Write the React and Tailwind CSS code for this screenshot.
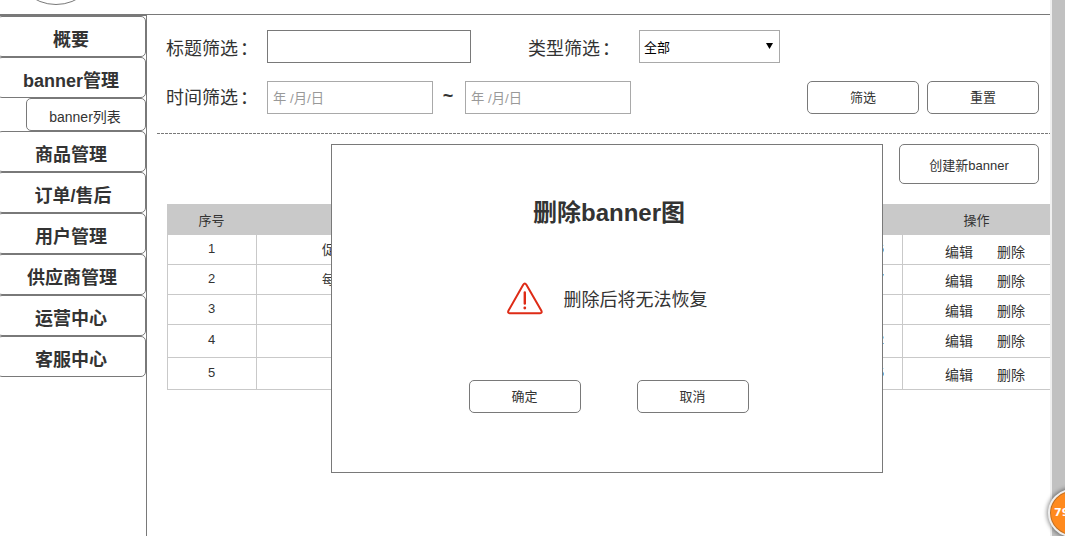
import React from "react";

const menu = [
  { label: "概要" },
  { label: "banner管理", sub: "banner列表" },
  { label: "商品管理" },
  { label: "订单/售后", shift: "pl-[4px]" },
  { label: "用户管理" },
  { label: "供应商管理", shift: "pl-[2px]" },
  { label: "运营中心" },
  { label: "客服中心" },
];

const rows = [
  { id: 1, title: "促", tail: "6", h: "h-[30px]", num: "pb-[3px]", ops: "pt-[5px]" },
  { id: 2, title: "每", tail: "7", h: "h-[30px]", num: "pb-[3px]", ops: "pt-[3px]" },
  { id: 3, title: "", tail: "", h: "h-[30px]", num: "pb-[3px]", ops: "pt-[3px]" },
  { id: 4, title: "", tail: "2", h: "h-[33px]", num: "pb-[4px]", ops: "" },
  { id: 5, title: "", tail: "5", h: "h-[32px]", num: "pb-[3px]", ops: "pt-[3px]" },
];

function Button({ children, className }) {
  return (
    <button
      className={`flex shrink-0 items-center justify-center rounded-[5px] border border-[#797979] bg-white text-[13px] leading-none text-[#333] ${className}`}
    >
      {children}
    </button>
  );
}

function DateInput() {
  return (
    <div className="flex h-[33px] w-[166px] shrink-0 items-center border border-[#a9a9a9] pl-[5px] pt-[2px] text-[13.3px] leading-none text-[#999]">
      年 /月/日
    </div>
  );
}

function Sidebar() {
  return (
    <nav className="flex w-[147px] shrink-0 flex-col border-t border-r border-[#797979]">
      {menu.map((item) => (
        <React.Fragment key={item.label}>
          <div className="-ml-[3px] flex h-[41px] shrink-0 items-center justify-center rounded-[5px] border border-[#797979] pt-[6px] pr-px text-[18px] font-bold leading-none text-[#333]">
            <span className={item.shift}>{item.label}</span>
          </div>
          {item.sub && (
            <div className="ml-[26px] flex h-[33px] shrink-0 items-center justify-center rounded-[5px] border border-[#797979] pt-[4px] pr-[2px] text-[14px] leading-none text-[#333]">
              {item.sub}
            </div>
          )}
        </React.Fragment>
      ))}
    </nav>
  );
}

function Label({ children, className }) {
  return (
    <span className={`flex shrink-0 whitespace-nowrap ${className}`}>
      {children}
      <span className="ml-[2px]">：</span>
    </span>
  );
}

function Filters() {
  return (
    <section className="flex shrink-0 flex-col gap-[18px] pt-[15px] text-[18px] leading-none text-[#333]">
      <div className="flex h-[33px] items-center pl-[19px]">
        <Label className="w-[101px] pt-[4px]">标题筛选</Label>
        <div className="h-[33px] w-[204px] shrink-0 border border-[#797979]" />
        <Label className="ml-[57px] w-[111px] pt-[4px]">类型筛选</Label>
        <div className="flex h-[33px] w-[141px] shrink-0 items-center justify-between border border-[#a9a9a9] pl-[4px] pr-[6px] text-[13px] text-black">
          <span className="pt-px">全部</span>
          <svg width="7" height="6" viewBox="0 0 7 6" className="mb-[2px]">
            <path d="M0 0H7L3.5 6Z" fill="#000" />
          </svg>
        </div>
      </div>
      <div className="flex h-[33px] items-center pl-[19px]">
        <Label className="w-[101px]">时间筛选</Label>
        <DateInput />
        <span className="w-[32px] shrink-0 pb-[4px] pr-[2px] text-center font-bold">~</span>
        <DateInput />
        <Button className="ml-[176px] h-[33px] w-[112px]">筛选</Button>
        <Button className="ml-[8px] h-[33px] w-[112px]">重置</Button>
      </div>
    </section>
  );
}

function Table() {
  return (
    <section className="ml-[20px] mt-[20px] text-[13px] leading-none text-[#333]">
      <div className="flex h-[31px] items-center bg-[#c9c9c9]">
        <div className="w-[89px] pt-px text-center">序号</div>
        <div className="flex-1" />
        <div className="w-[147px] pt-px text-center">操作</div>
      </div>
      {rows.map((r) => (
        <div key={r.id} className={`flex border-b border-[#c9c9c9] ${r.h}`}>
          <div className={`flex w-[90px] items-center justify-center border-r border-l border-[#c9c9c9] pr-px ${r.num}`}>
            {r.id}
          </div>
          <div className="flex flex-1 items-center justify-between border-r border-[#c9c9c9] pl-[65px] pr-[18px]">
            <span>{r.title}</span>
            <span className="pb-[3px]">{r.tail}</span>
          </div>
          <div className={`flex w-[147px] items-center gap-[24px] pl-[42px] text-[14px] ${r.ops}`}>
            <span>编辑</span>
            <span>删除</span>
          </div>
        </div>
      ))}
    </section>
  );
}

function Modal() {
  return (
    <div className="absolute left-[331px] top-[144px] flex h-[329px] w-[552px] flex-col items-center border border-[#797979] bg-white text-[#333]">
      <h2 className="mt-[54px] pl-[4px] text-[24px] font-bold leading-[28px]">删除banner图</h2>
      <div className="mt-[52px] flex h-[40px] items-center gap-[20px]">
        <svg width="37" height="34" viewBox="0 0 37 34" fill="none" stroke="#de2b16" strokeLinecap="round" strokeLinejoin="round">
          <path d="M16.2 2.8Q17.8 .4 19.4 2.8L34.4 28.8Q35.3 31.2 33.2 31.2H2.6Q.5 31.2 1.4 28.8Z" strokeWidth="2" />
          <path d="M17.8 10.5V21.5" strokeWidth="2.4" />
          <circle cx="17.8" cy="26" r="1.4" fill="#de2b16" stroke="none" />
        </svg>
        <span className="pt-[2px] text-[18px] leading-none">删除后将无法恢复</span>
      </div>
      <div className="mt-[61px] flex gap-[56px] pl-[3px]">
        <Button className="h-[33px] w-[112px]">确定</Button>
        <Button className="h-[33px] w-[112px]">取消</Button>
      </div>
    </div>
  );
}

export default function App() {
  return (
    <div className="relative flex h-[536px] w-[1065px] overflow-hidden bg-white font-['Liberation_Sans','Noto_Sans_CJK_SC',sans-serif]">
      <div className="flex w-[1050px] shrink-0 flex-col">
        <header className="h-[15px] shrink-0 border-b border-[#797979]">
          <svg width="120" height="14" viewBox="0 0 120 14" className="block">
            <ellipse cx="56" cy="-35.5" rx="42" ry="40" fill="none" stroke="#797979" />
          </svg>
        </header>
        <div className="flex flex-1">
          <Sidebar />
          <main className="flex flex-1 flex-col">
            <Filters />
            <div className="ml-[10px] mt-[19px] h-px shrink-0 bg-[repeating-linear-gradient(90deg,#797979_0_3px,transparent_3px_4px)]" />
            <div className="mt-[10px] flex justify-end pr-[11px]">
              <Button className="h-[40px] w-[140px] pt-[3px]">创建新banner</Button>
            </div>
            <Table />
          </main>
        </div>
      </div>
      <div className="w-[15px] shrink-0 border-l-2 border-[#f0f0f0] bg-[#c1c1c1]" />
      <Modal />
      <div className="absolute left-[1048px] top-[489px] flex h-[48px] w-[48px] items-center rounded-full border-2 border-[#eeeeee] bg-[#ff8a1e] pb-[2px] pl-[4px] font-['DejaVu_Sans',sans-serif] text-[11px] font-bold leading-none text-white shadow-[0_0_4px_1px_rgba(0,0,0,0.45),inset_0_0_0_1px_#b8702c]">
        79
      </div>
    </div>
  );
}
